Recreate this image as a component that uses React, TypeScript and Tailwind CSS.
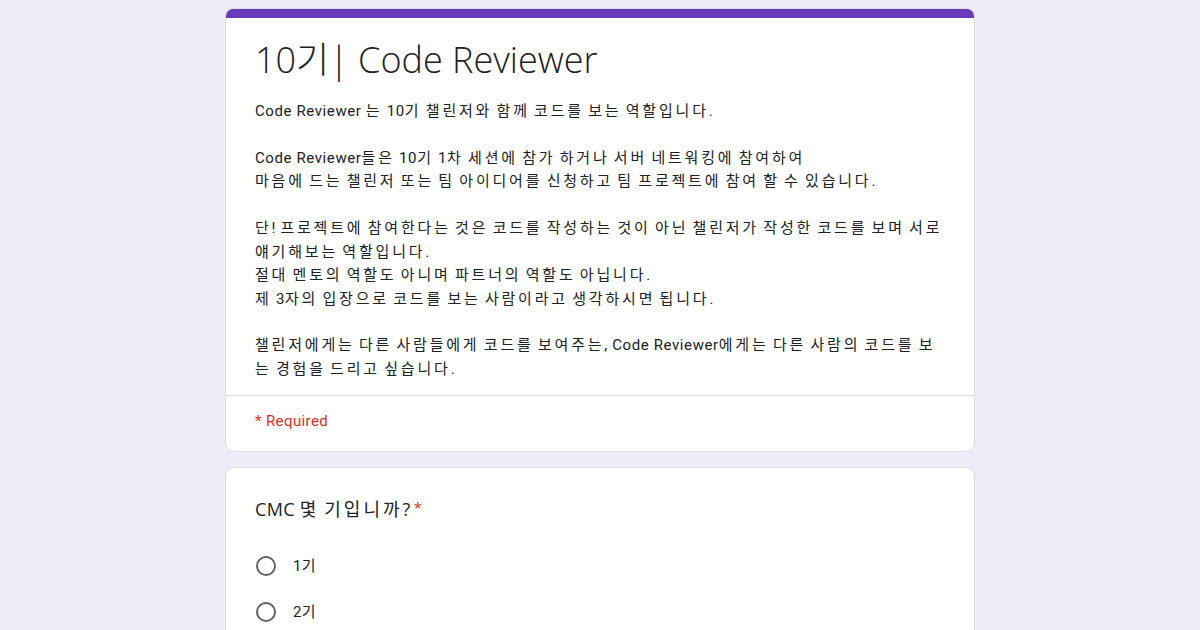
import React from "react";

function Mixed({ text, k = "tracking-[2.8px]" }: { text: string; k?: string }) {
  const parts = text.split(/([\uAC00-\uD7A3]+)/);
  return (
    <>
      {parts.map((p, i) =>
        /[\uAC00-\uD7A3]/.test(p) ? (
          <span key={i} className={k}>
            {p}
          </span>
        ) : (
          <span key={i}>{p}</span>
        )
      )}
    </>
  );
}

const lines: string[] = [
  "Code Reviewer 는 10기 챌린저와 함께 코드를 보는 역할입니다.",
  "",
  "Code Reviewer들은 10기 1차 세션에 참가 하거나 서버 네트워킹에 참여하여",
  "마음에 드는 챌린저 또는 팀 아이디어를 신청하고 팀 프로젝트에 참여 할 수 있습니다.",
  "",
  "단! 프로젝트에 참여한다는 것은 코드를 작성하는 것이 아닌 챌린저가 작성한 코드를 보며 서로",
  "얘기해보는 역할입니다.",
  "절대 멘토의 역할도 아니며 파트너의 역할도 아닙니다.",
  "제 3자의 입장으로 코드를 보는 사람이라고 생각하시면 됩니다.",
  "",
  "챌린저에게는 다른 사람들에게 코드를 보여주는, Code Reviewer에게는 다른 사람의 코드를 보",
  "는 경험을 드리고 싶습니다.",
];

function Radio({ label }: { label: string }) {
  return (
    <div className="flex items-center h-[46px]">
      <div className="w-5 h-5 rounded-full border-2 border-[#5f6368] ml-[1px]" />
      <span className="ml-[17px] text-[15px] tracking-[0.4px] text-[#202124]">
        <Mixed text={label} k="tracking-[2px]" />
      </span>
    </div>
  );
}

export default function App() {
  return (
    <div
      className="w-[1200px] h-[630px] overflow-hidden bg-[#f0ebf8] pt-2"
      style={{ fontFamily: "Roboto, 'Noto Sans CJK KR', sans-serif" }}
    >
      <div className="w-[750px] mx-auto flex flex-col gap-[15px]">
        <div className="rounded-lg bg-white border border-[#dadce0] overflow-hidden">
          <div className="h-[10px] bg-[#673ab7] -mx-px -mt-px" />
          <div className="px-[29px] pt-[18px] pb-[14px]">
            <div
              className="text-[36px] leading-[48px] font-light text-[#202124] whitespace-pre"
              style={{ fontFamily: "'Open Sans', 'Noto Sans CJK KR', sans-serif" }}
            >
              10기| Code Reviewer
            </div>
            <div className="mt-[16px] text-[15px] leading-[23.45px] tracking-[0.6px] text-[#202124]">
              {lines.map((l, i) => (
                <div key={i} className="whitespace-nowrap h-[23.45px]">
                  {l ? <Mixed text={l} /> : "\u00a0"}
                </div>
              ))}
            </div>
          </div>
          <div className="border-t border-[#dadce0] px-[29px] h-[56px] flex items-center pb-[5px]">
            <span className="text-[15px] tracking-[0.4px] text-[#d93025]">* Required</span>
          </div>
        </div>
        <div className="rounded-lg bg-white border border-[#dadce0] px-[29px] pt-[28px] pb-6">
          <div
            className="text-[18px] text-[#202124] tracking-[0.3px] flex items-start"
            style={{ fontFamily: "'Open Sans', 'Noto Sans CJK KR', sans-serif" }}
          >
            <span>
              <Mixed text="CMC 몇 기입니까?" k="tracking-[3px]" />
            </span>
            <span className="ml-[3px] text-[#d93025] text-[15px]">*</span>
          </div>
          <div className="mt-[20px]">
            <Radio label="1기" />
            <Radio label="2기" />
          </div>
        </div>
      </div>
    </div>
  );
}
